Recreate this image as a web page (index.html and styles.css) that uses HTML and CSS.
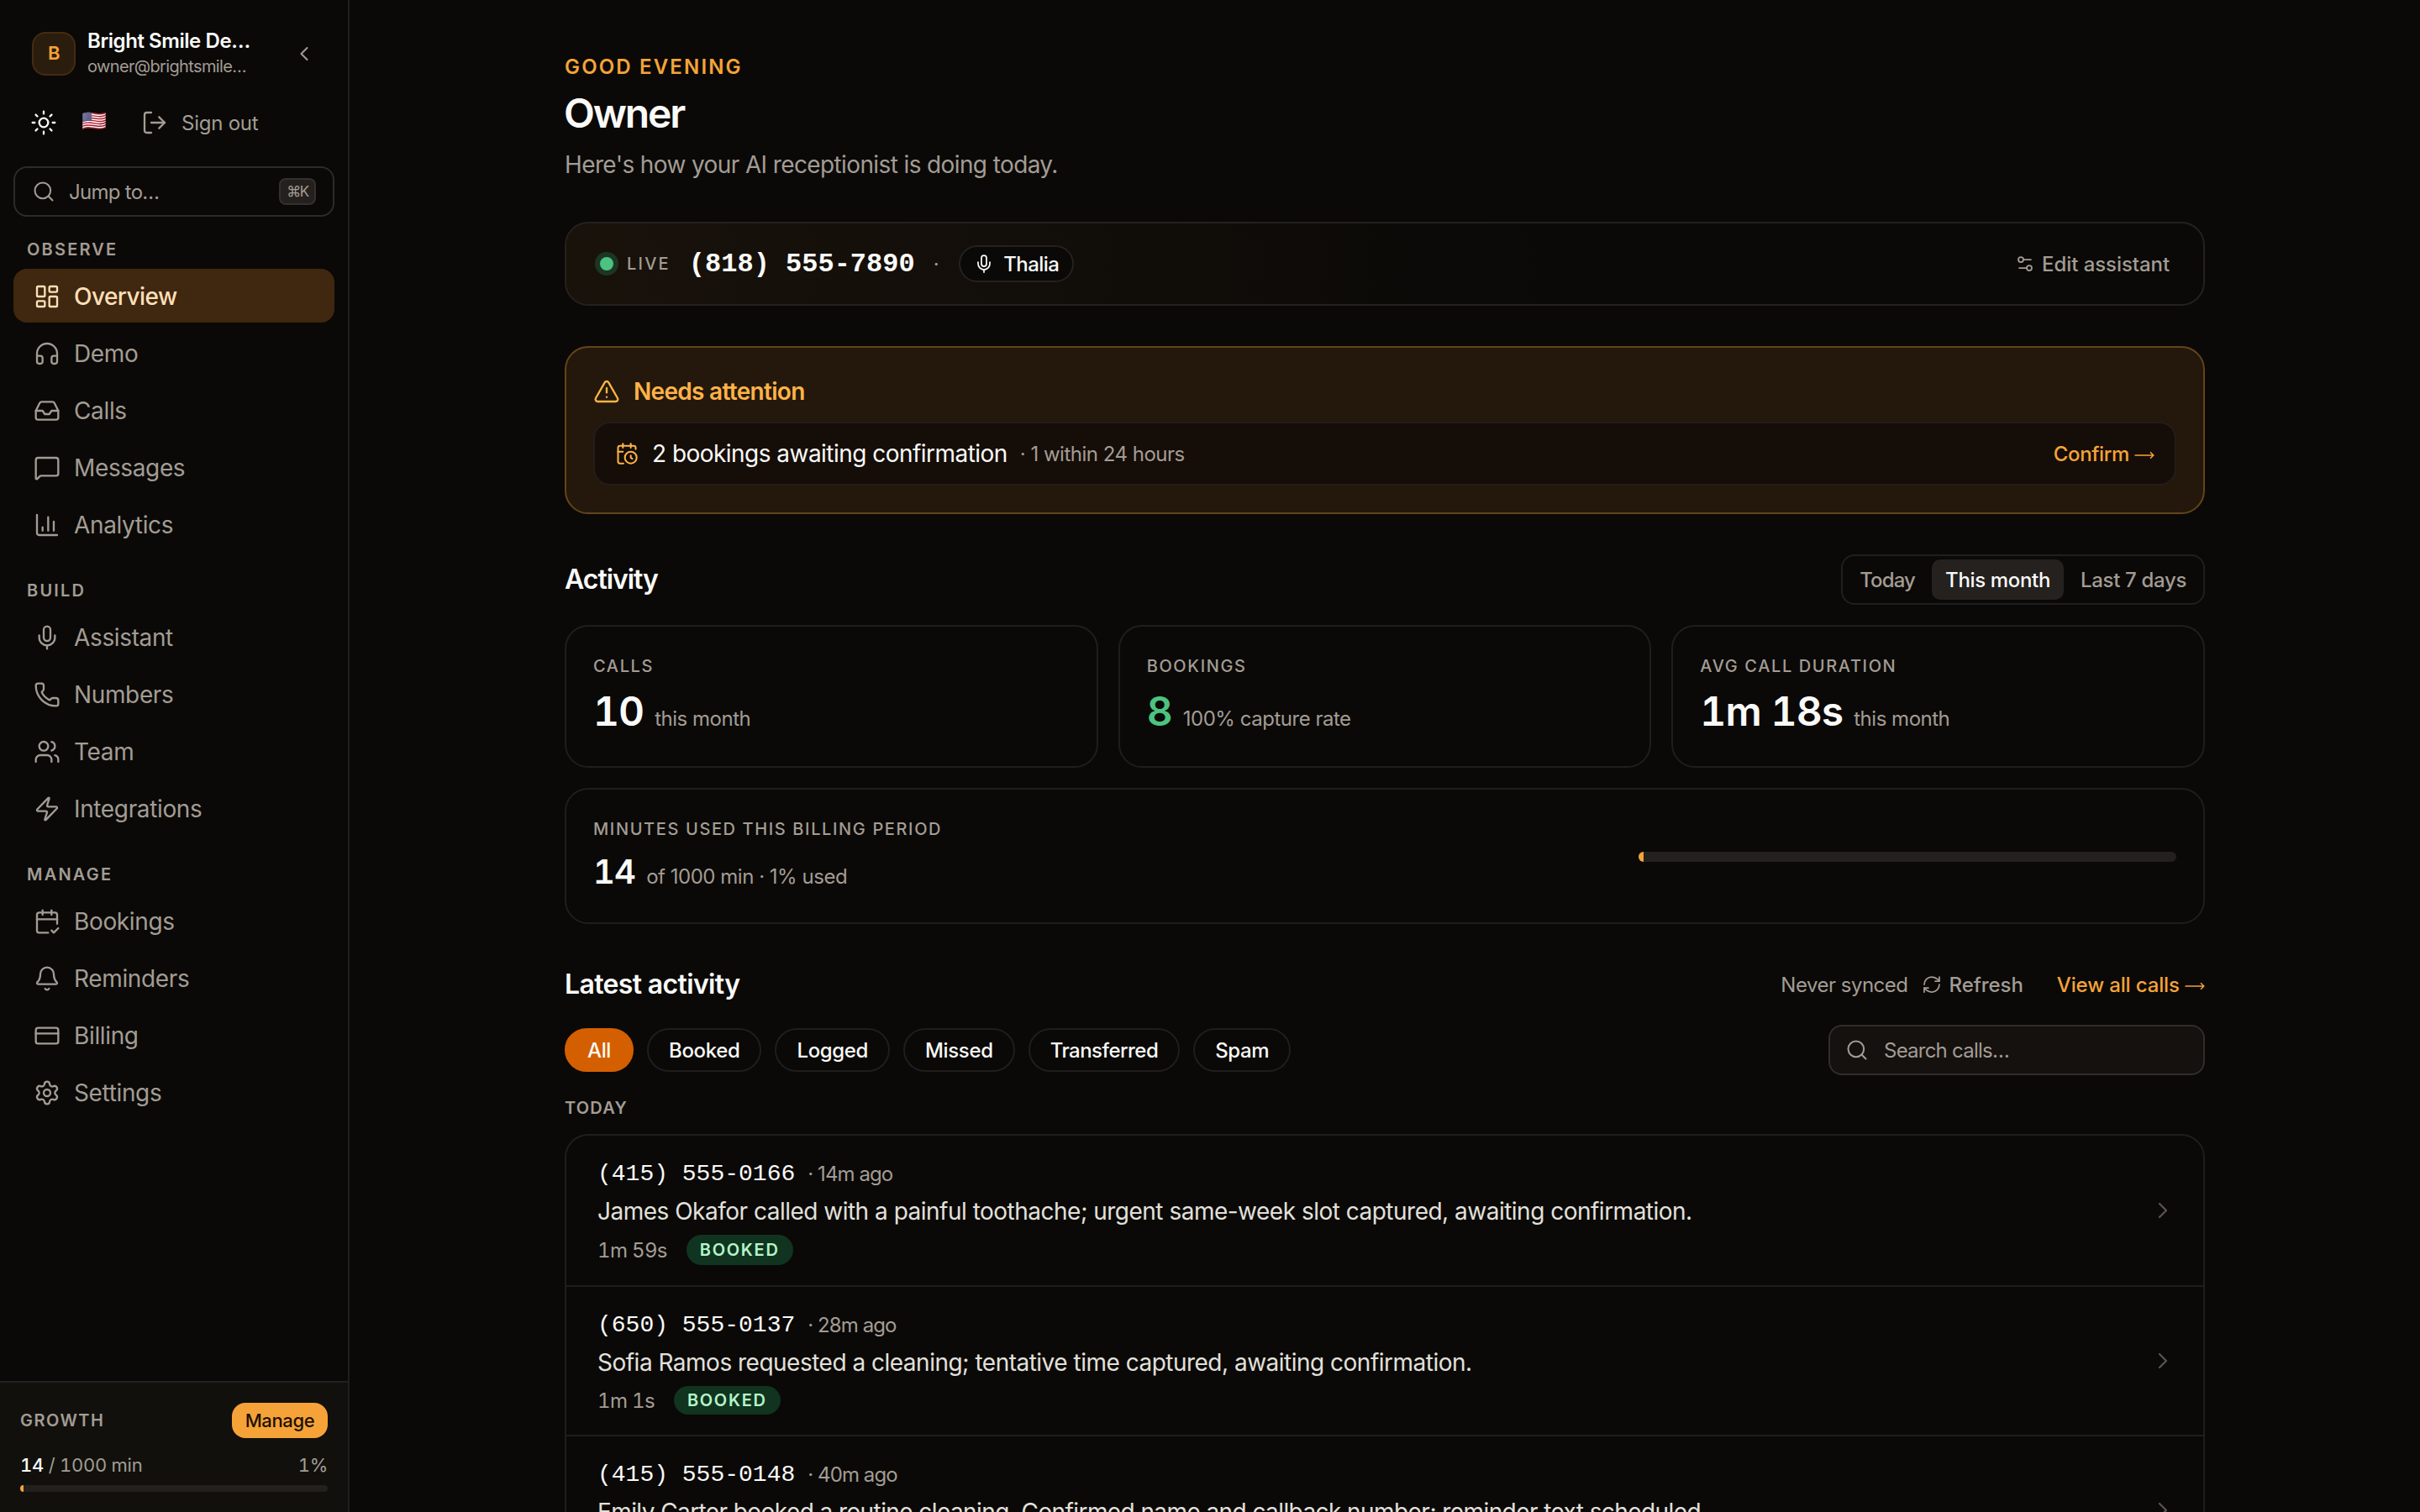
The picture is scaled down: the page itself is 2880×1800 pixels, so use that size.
FILE: index.html
```html
<!DOCTYPE html>
<html lang="en">

<head>
    <meta charset="UTF-8">
    <meta name="viewport" content="width=device-width, initial-scale=1.0">
    <title>Overview - Bright Smile Dental</title>
    <link rel="stylesheet" href="styles.css">
</head>

<body>

    <!-- Shared icons -->
    <svg class="sprite">
        <symbol id="i-search" viewBox="0 0 24 24"><path d="m21 21-4.34-4.34"/><circle cx="11" cy="11" r="8"/></symbol>
        <symbol id="i-mic" viewBox="0 0 24 24"><path d="M12 19v3"/><path d="M19 10v2a7 7 0 0 1-14 0v-2"/><rect x="9" y="2" width="6" height="13" rx="3"/></symbol>
        <symbol id="i-right" viewBox="0 0 24 24"><path d="m9 18 6-6-6-6"/></symbol>
        <symbol id="i-arrow" viewBox="0 0 24 10"><path d="M0.5 5h22M19 1.2 22.8 5 19 8.8"/></symbol>
    </svg>

    <!-- Sidebar -->
    <aside class="sidebar">
        <div class="account">
            <div class="avatar">B</div>
            <div class="account-text">
                <div class="account-name">Bright Smile De…</div>
                <div class="account-mail">owner@brightsmile…</div>
            </div>
            <svg class="icon icon-28 collapse" viewBox="0 0 24 24"><path d="m15 18-6-6 6-6"/></svg>
        </div>

        <div class="quick">
            <svg class="icon sun" viewBox="0 0 24 24"><circle cx="12" cy="12" r="4"/><path d="M12 2v2M12 20v2M4.93 4.93l1.41 1.41M17.66 17.66l1.41 1.41M2 12h2M20 12h2M6.34 17.66l-1.41 1.41M19.07 4.93l-1.41 1.41"/></svg>
            <span class="flag">🇺🇸</span>
            <svg class="icon" viewBox="0 0 24 24"><path d="m16 17 5-5-5-5"/><path d="M21 12H9"/><path d="M9 21H5a2 2 0 0 1-2-2V5a2 2 0 0 1 2-2h4"/></svg>
            <span class="signout">Sign out</span>
        </div>

        <div class="jump">
            <svg class="icon icon-28"><use href="#i-search"/></svg>
            <span class="jump-text">Jump to…</span>
            <kbd>⌘K</kbd>
        </div>

        <nav>
            <div class="nav-label">Observe</div>
            <a class="nav-item active"><svg class="icon" viewBox="0 0 24 24"><rect x="3" y="3" width="7" height="9" rx="1"/><rect x="14" y="3" width="7" height="5" rx="1"/><rect x="14" y="12" width="7" height="9" rx="1"/><rect x="3" y="16" width="7" height="5" rx="1"/></svg>Overview</a>
            <a class="nav-item"><svg class="icon" viewBox="0 0 24 24"><path d="M3 14h3a2 2 0 0 1 2 2v3a2 2 0 0 1-2 2H5a2 2 0 0 1-2-2v-7a9 9 0 0 1 18 0v7a2 2 0 0 1-2 2h-1a2 2 0 0 1-2-2v-3a2 2 0 0 1 2-2h3"/></svg>Demo</a>
            <a class="nav-item"><svg class="icon" viewBox="0 0 24 24"><path d="M22 12h-6l-2 3h-4l-2-3H2"/><path d="M5.45 5.11 2 12v6a2 2 0 0 0 2 2h16a2 2 0 0 0 2-2v-6l-3.45-6.89A2 2 0 0 0 16.76 4H7.24a2 2 0 0 0-1.79 1.11z"/></svg>Calls</a>
            <a class="nav-item"><svg class="icon" viewBox="0 0 24 24"><path d="M22 17a2 2 0 0 1-2 2H6.828a2 2 0 0 0-1.414.586l-2.202 2.202A.71.71 0 0 1 2 21.286V5a2 2 0 0 1 2-2h16a2 2 0 0 1 2 2z"/></svg>Messages</a>
            <a class="nav-item"><svg class="icon" viewBox="0 0 24 24"><path d="M3 3v16a2 2 0 0 0 2 2h16"/><path d="M18 17V9"/><path d="M13 17V5"/><path d="M8 17v-3"/></svg>Analytics</a>

            <div class="nav-label">Build</div>
            <a class="nav-item"><svg class="icon"><use href="#i-mic"/></svg>Assistant</a>
            <a class="nav-item"><svg class="icon" viewBox="0 0 24 24"><path d="M13.832 16.568a1 1 0 0 0 1.213-.303l.355-.465A2 2 0 0 1 17 15h3a2 2 0 0 1 2 2v3a2 2 0 0 1-2 2A18 18 0 0 1 2 4a2 2 0 0 1 2-2h3a2 2 0 0 1 2 2v3a2 2 0 0 1-.8 1.6l-.468.351a1 1 0 0 0-.292 1.233 14 14 0 0 0 6.392 6.384"/></svg>Numbers</a>
            <a class="nav-item"><svg class="icon" viewBox="0 0 24 24"><path d="M16 21v-2a4 4 0 0 0-4-4H6a4 4 0 0 0-4 4v2"/><path d="M16 3.128a4 4 0 0 1 0 7.744"/><path d="M22 21v-2a4 4 0 0 0-3-3.87"/><circle cx="9" cy="7" r="4"/></svg>Team</a>
            <a class="nav-item"><svg class="icon" viewBox="0 0 24 24"><path d="M4 14a1 1 0 0 1-.78-1.63l9.9-10.2a.5.5 0 0 1 .86.46l-1.92 6.02A1 1 0 0 0 13 10h7a1 1 0 0 1 .78 1.63l-9.9 10.2a.5.5 0 0 1-.86-.46l1.92-6.02A1 1 0 0 0 11 14z"/></svg>Integrations</a>

            <div class="nav-label">Manage</div>
            <a class="nav-item"><svg class="icon" viewBox="0 0 24 24"><path d="M8 2v4"/><path d="M16 2v4"/><path d="M21 14V6a2 2 0 0 0-2-2H5a2 2 0 0 0-2 2v14a2 2 0 0 0 2 2h8"/><path d="M3 10h18"/><path d="m16 20 2 2 4-4"/></svg>Bookings</a>
            <a class="nav-item"><svg class="icon" viewBox="0 0 24 24"><path d="M10.268 21a2 2 0 0 0 3.464 0"/><path d="M3.262 15.326A1 1 0 0 0 4 17h16a1 1 0 0 0 .74-1.673C19.41 13.956 18 12.499 18 8A6 6 0 0 0 6 8c0 4.499-1.411 5.956-2.738 7.326"/></svg>Reminders</a>
            <a class="nav-item"><svg class="icon" viewBox="0 0 24 24"><rect x="2" y="5" width="20" height="14" rx="2"/><path d="M2 10h20"/></svg>Billing</a>
            <a class="nav-item"><svg class="icon" viewBox="0 0 24 24"><path d="M9.671 4.136a2.34 2.34 0 0 1 4.659 0 2.34 2.34 0 0 0 3.319 1.915 2.34 2.34 0 0 1 2.33 4.033 2.34 2.34 0 0 0 0 3.831 2.34 2.34 0 0 1-2.33 4.033 2.34 2.34 0 0 0-3.319 1.915 2.34 2.34 0 0 1-4.659 0 2.34 2.34 0 0 0-3.32-1.915 2.34 2.34 0 0 1-2.33-4.033 2.34 2.34 0 0 0 0-3.831A2.34 2.34 0 0 1 6.35 6.051a2.34 2.34 0 0 0 3.319-1.915"/><circle cx="12" cy="12" r="3"/></svg>Settings</a>
        </nav>

        <div class="plan">
            <div class="plan-row">
                <span class="plan-name">Growth</span>
                <button class="manage">Manage</button>
            </div>
            <div class="plan-row plan-usage">
                <span><b>14</b> / 1000 min</span>
                <span>1%</span>
            </div>
            <div class="bar"><div class="bar-fill" style="width: 1.1%"></div></div>
        </div>
    </aside>

    <!-- Page -->
    <main>
        <header>
            <div class="greeting">Good evening</div>
            <h1>Owner</h1>
            <p class="lead">Here's how your AI receptionist is doing today.</p>
        </header>

        <section class="live">
            <span class="dot"></span>
            <span class="live-label">Live</span>
            <span class="live-phone">(818) 555-7890</span>
            <span class="sep">·</span>
            <span class="voice"><svg class="icon icon-24"><use href="#i-mic"/></svg>Thalia</span>
            <a class="edit"><svg class="icon icon-24" viewBox="0 0 24 24"><path d="M14 17H5"/><path d="M19 7h-9"/><circle cx="17" cy="17" r="3"/><circle cx="7" cy="7" r="3"/></svg>Edit assistant</a>
        </section>

        <section class="attention">
            <div class="attention-title">
                <svg class="icon" viewBox="0 0 24 24"><path d="m21.73 18-8-14a2 2 0 0 0-3.48 0l-8 14A2 2 0 0 0 4 21h16a2 2 0 0 0 1.73-3"/><path d="M12 9v4"/><path d="M12 17h.01"/></svg>
                Needs attention
            </div>
            <div class="attention-item">
                <svg class="icon icon-28" viewBox="0 0 24 24"><path d="M16 14v2.2l1.6 1"/><path d="M16 2v4"/><path d="M21 7.5V6a2 2 0 0 0-2-2H5a2 2 0 0 0-2 2v14a2 2 0 0 0 2 2h3.5"/><path d="M3 10h5"/><path d="M8 2v4"/><circle cx="16" cy="16" r="6"/></svg>
                <span class="attention-text">2 bookings awaiting confirmation</span>
                <span class="attention-note">· 1 within 24 hours</span>
                <a class="link">Confirm <svg class="arrow"><use href="#i-arrow"/></svg></a>
            </div>
        </section>

        <div class="section-head activity-head">
            <h2>Activity</h2>
            <div class="segmented">
                <button>Today</button>
                <button class="on">This month</button>
                <button>Last 7 days</button>
            </div>
        </div>

        <div class="stats">
            <div class="card">
                <div class="label">Calls</div>
                <div class="value"><b>10</b><span>this month</span></div>
            </div>
            <div class="card">
                <div class="label">Bookings</div>
                <div class="value green"><b>8</b><span>100% capture rate</span></div>
            </div>
            <div class="card">
                <div class="label">Avg call duration</div>
                <div class="value"><b>1m 18s</b><span>this month</span></div>
            </div>
        </div>

        <div class="card minutes">
            <div class="minutes-text">
                <div class="label">Minutes used this billing period</div>
                <div class="value"><b>14</b><span>of 1000 min · 1% used</span></div>
            </div>
            <div class="bar"><div class="bar-fill" style="width: 1%"></div></div>
        </div>

        <div class="section-head latest-head">
            <h2>Latest activity</h2>
            <div class="sync">
                <span>Never synced</span>
                <span class="refresh"><svg class="icon icon-24" viewBox="0 0 24 24"><path d="M3 12a9 9 0 0 1 9-9 9.75 9.75 0 0 1 6.74 2.74L21 8"/><path d="M21 3v5h-5"/><path d="M21 12a9 9 0 0 1-9 9 9.75 9.75 0 0 1-6.74-2.74L3 16"/><path d="M8 16H3v5"/></svg>Refresh</span>
                <a class="link">View all calls <svg class="arrow"><use href="#i-arrow"/></svg></a>
            </div>
        </div>

        <div class="filters">
            <button class="pill on">All</button>
            <button class="pill">Booked</button>
            <button class="pill">Logged</button>
            <button class="pill">Missed</button>
            <button class="pill long">Transferred</button>
            <button class="pill">Spam</button>
            <div class="search">
                <svg class="icon icon-28"><use href="#i-search"/></svg>
                <span>Search calls…</span>
            </div>
        </div>

        <div class="day">Today</div>

        <div class="calls">
            <div class="call">
                <div class="call-body">
                    <div class="call-top"><span class="phone">(415) 555-0166</span><span class="ago">· 14m ago</span></div>
                    <div class="summary">James Okafor called with a painful toothache; urgent same-week slot captured, awaiting confirmation.</div>
                    <div class="meta"><span class="length">1m 59s</span><span class="badge">Booked</span></div>
                </div>
                <svg class="icon"><use href="#i-right"/></svg>
            </div>
            <div class="call">
                <div class="call-body">
                    <div class="call-top"><span class="phone">(650) 555-0137</span><span class="ago">· 28m ago</span></div>
                    <div class="summary">Sofia Ramos requested a cleaning; tentative time captured, awaiting confirmation.</div>
                    <div class="meta"><span class="length">1m 1s</span><span class="badge">Booked</span></div>
                </div>
                <svg class="icon"><use href="#i-right"/></svg>
            </div>
            <div class="call">
                <div class="call-body">
                    <div class="call-top"><span class="phone">(415) 555-0148</span><span class="ago">· 40m ago</span></div>
                    <div class="summary tight">Emily Carter booked a routine cleaning. Confirmed name and callback number; reminder text scheduled.</div>
                    <div class="meta"><span class="length">1m 12s</span><span class="badge">Booked</span></div>
                </div>
                <svg class="icon"><use href="#i-right"/></svg>
            </div>
        </div>
    </main>

</body>

</html>
```
FILE: styles.css
```css
* {
    box-sizing: border-box;
}

body {
    margin: 0;
    display: flex;
    height: 100vh;
    overflow: hidden;
    background-color: #0a0907;
    color: #fafaf8;
    font-family: Inter, "Liberation Sans", sans-serif;
    font-size: 24px;
    letter-spacing: -0.015em;
}

h1, h2, p {
    margin: 0;
}

button {
    border: none;
    background: none;
    padding: 0;
    color: inherit;
    font: inherit;
    letter-spacing: inherit;
    white-space: nowrap;
}

.sprite {
    display: none;
}

.icon {
    width: 32px;
    height: 32px;
    flex: none;
    fill: none;
    stroke: currentColor;
    stroke-width: 1.75;
    stroke-linecap: round;
    stroke-linejoin: round;
}

.icon-28 {
    width: 28px;
    height: 28px;
}

.icon-24 {
    width: 24px;
    height: 24px;
}

.arrow {
    width: 24px;
    height: 10px;
    fill: none;
    stroke: currentColor;
    stroke-width: 1.5;
    vertical-align: 2px;
}

/* Sidebar */
.sidebar {
    width: 416px;
    flex: none;
    display: flex;
    flex-direction: column;
    padding: 32px 16px 0;
    border-right: 2px solid #201f1d;
    color: #a39c94;
}

.account {
    display: flex;
    align-items: center;
    height: 64px;
    padding: 0 22px;
}

.avatar {
    width: 52px;
    height: 52px;
    border: 2px solid #432c12;
    border-radius: 16px;
    background-color: #2a1d0e;
    color: #f5a338;
    font-size: 22px;
    font-weight: 600;
    line-height: 46px;
    text-align: center;
}

.account-text {
    margin-left: 14px;
}

.account-name {
    color: #fafaf8;
    font-weight: 600;
    line-height: 31px;
    letter-spacing: -0.018em;
}

.account-mail {
    font-size: 20px;
    line-height: 31px;
    letter-spacing: -0.032em;
}

.collapse {
    margin-left: auto;
}

.quick {
    display: flex;
    align-items: center;
    height: 64px;
    margin: 18px 0 20px;
    padding-left: 20px;
}

.sun {
    color: #fafaf8;
}

.flag {
    width: 36px;
    margin: 0 35px 5px 29px;
    font-size: 24px;
}

.signout {
    margin-left: 16px;
    letter-spacing: -0.01em;
}

.jump {
    display: flex;
    align-items: center;
    height: 60px;
    padding: 0 20px;
    border: 2px solid #2d2b29;
    border-radius: 16px;
}

.jump-text {
    margin-left: 16px;
    letter-spacing: -0.03em;
}

kbd {
    width: 44px;
    height: 32px;
    margin-left: auto;
    border: 2px solid #33302e;
    border-radius: 8px;
    background-color: #24201e;
    font-family: Inter, sans-serif;
    font-size: 17px;
    line-height: 28px;
    text-align: center;
    letter-spacing: -0.09em;
}

.nav-label {
    margin: 32px 0 8px 16px;
    font-size: 20px;
    font-weight: 600;
    line-height: 30px;
    letter-spacing: 0.11em;
    text-transform: uppercase;
}

.nav-label:first-child {
    margin-top: 24px;
}

.nav-item {
    display: flex;
    align-items: center;
    gap: 16px;
    height: 64px;
    margin-bottom: 4px;
    padding: 1px 0 0 24px;
    border-radius: 16px;
    font-size: 28px;
}

.nav-item:has(+ .nav-label) {
    margin-bottom: 0;
}

.nav-item.active {
    background-color: #3f280f;
    color: #ffdfb8;
    font-weight: 500;
    letter-spacing: -0.02em;
}

.plan {
    margin: auto -16px 0;
    padding: 24px;
    border-top: 2px solid #23211f;
    background-color: #11100c;
    font-size: 22px;
}

.plan-row {
    display: flex;
    align-items: center;
    justify-content: space-between;
}

.plan-name {
    font-size: 20px;
    font-weight: 600;
    letter-spacing: 0.073em;
    text-transform: uppercase;
}

.manage {
    width: 114px;
    height: 42px;
    border-radius: 16px;
    background-color: #f5a338;
    color: #1d1003;
    font-weight: 500;
}

.plan-usage {
    height: 32px;
    margin: 16px 0 8px;
    letter-spacing: -0.012em;
    font-feature-settings: "tnum";
}

.plan-usage b {
    color: #fafaf8;
    font-weight: 500;
}

.bar {
    height: 8px;
    border-radius: 6px;
    background-color: #24201d;
    overflow: hidden;
}

.bar-fill {
    height: 100%;
    background-color: #f5a338;
}

/* Page */
main {
    width: 1952px;
    margin: 0 auto;
    padding-top: 64px;
}

.greeting {
    color: #f5a338;
    font-weight: 600;
    line-height: 32px;
    letter-spacing: 0.09em;
    text-transform: uppercase;
}

h1 {
    margin: 9px 0 11px -1px;
    font-size: 48px;
    font-weight: 600;
    line-height: 60px;
    letter-spacing: -0.045em;
}

.lead {
    color: #a39c94;
    font-size: 28px;
    line-height: 40px;
    letter-spacing: -0.022em;
}

.live {
    display: flex;
    align-items: center;
    height: 100px;
    margin: 48px 0;
    padding: 0 40px;
    border: 2px solid #24211e;
    border-radius: 28px;
    background: linear-gradient(90deg, #19120b, #0a0907 60%);
}

.dot {
    width: 16px;
    height: 16px;
    border-radius: 50%;
    background-color: #4cc380;
    box-shadow: 0 0 0 6px #1d3623;
}

.live-label {
    margin-left: 16px;
    color: #a39c94;
    font-size: 20px;
    font-weight: 500;
    letter-spacing: 0.11em;
    text-transform: uppercase;
}

.live-phone {
    margin-left: 22px;
    font-family: "Liberation Mono", monospace;
    font-size: 32px;
    font-weight: 600;
    letter-spacing: 0;
}

.sep {
    margin-left: 22px;
    color: #a39c94;
}

.voice {
    display: flex;
    align-items: center;
    gap: 11px;
    height: 44px;
    margin-left: 24px;
    padding: 0 16px;
    border: 2px solid #24221f;
    border-radius: 22px;
    background-color: #0a0907;
    font-weight: 500;
    letter-spacing: -0.024em;
}

.edit {
    display: flex;
    align-items: center;
    gap: 8px;
    margin-left: auto;
    color: #a39c94;
    font-weight: 500;
    letter-spacing: -0.003em;
}

.attention {
    height: 200px;
    padding: 32px;
    border: 2px solid #644419;
    border-radius: 28px;
    background-color: #23180b;
}

.attention-title {
    display: flex;
    align-items: center;
    gap: 16px;
    height: 40px;
    color: #ffb347;
    font-size: 28px;
    font-weight: 600;
    letter-spacing: -0.025em;
}

.attention-item {
    display: flex;
    align-items: center;
    height: 76px;
    margin-top: 16px;
    padding: 0 24px;
    border: 2px solid #241d1a;
    border-radius: 20px;
    background-color: #150d08;
}

.attention-item > .icon {
    color: #ffb347;
}

.attention-text {
    margin-left: 16px;
    font-size: 28px;
    letter-spacing: -0.019em;
}

.attention-note {
    margin-left: 15px;
    color: #a39c94;
    letter-spacing: -0.021em;
}

.link {
    margin-left: auto;
    color: #f5a338;
    font-weight: 500;
}

.section-head {
    display: flex;
    align-items: center;
    justify-content: space-between;
}

h2 {
    padding-bottom: 2px;
    font-size: 32px;
    font-weight: 600;
    letter-spacing: -0.02em;
}

.activity-head {
    height: 60px;
    margin: 48px 0 24px;
}

.activity-head h2 {
    letter-spacing: -0.032em;
}

.segmented {
    display: flex;
    gap: 4px;
    height: 60px;
    padding: 4px;
    border: 2px solid #201f1d;
    border-radius: 16px;
    color: #a39c94;
}

.segmented button {
    padding: 0 16px;
    border-radius: 10px;
    font-weight: 500;
    letter-spacing: -0.014em;
}

.segmented button:first-child {
    letter-spacing: -0.036em;
}

.segmented .on {
    background-color: #24211f;
    color: #fafaf8;
}

.stats {
    display: grid;
    grid-template-columns: repeat(3, 1fr);
    gap: 24px;
}

.card {
    height: 170px;
    padding: 32px;
    border: 2px solid #1f1e1c;
    border-radius: 28px;
}

.label {
    color: #a39c94;
    font-size: 20px;
    font-weight: 500;
    line-height: 30px;
    letter-spacing: 0.081em;
    text-transform: uppercase;
}

.value {
    display: flex;
    align-items: baseline;
    gap: 13px;
    margin-top: 9px;
    line-height: 60px;
}

.value b {
    font-size: 48px;
    font-weight: 600;
    letter-spacing: -0.02em;
    font-feature-settings: "tnum";
}

.value span {
    color: #a39c94;
    letter-spacing: -0.02em;
}

.value.green b {
    color: #4cc380;
}

.minutes {
    display: flex;
    justify-content: space-between;
    height: 162px;
    margin-top: 24px;
}

.minutes .value {
    line-height: 54px;
}

.minutes .value b {
    font-size: 40px;
}

.minutes .bar {
    width: 640px;
    height: 12px;
    margin-top: 2px;
    align-self: center;
}

.latest-head {
    height: 48px;
    margin: 48px 0 24px;
}

.sync {
    display: flex;
    align-items: center;
    color: #a39c94;
    letter-spacing: -0.021em;
}

.refresh {
    display: flex;
    align-items: center;
    gap: 8px;
    margin: 0 40px 0 17px;
    font-weight: 500;
    letter-spacing: -0.002em;
}

.sync .link {
    letter-spacing: -0.006em;
}

.filters {
    display: flex;
    align-items: center;
    gap: 16px;
    height: 60px;
}

.pill {
    height: 52px;
    padding: 0 24px;
    border: 2px solid #1f1e1c;
    border-radius: 26px;
    font-weight: 500;
}

.pill.on {
    padding: 0 25px;
    border-color: #d45f00;
    background-color: #d45f00;
}

.pill.long {
    letter-spacing: -0.022em;
}

.search {
    display: flex;
    align-items: center;
    gap: 18px;
    width: 448px;
    height: 60px;
    margin-left: auto;
    padding: 0 18px;
    border: 2px solid #302d2a;
    border-radius: 16px;
    background-color: #15110e;
    color: #a39c94;
    letter-spacing: -0.032em;
}

.day {
    margin: 24px 0 16px;
    color: #a39c94;
    font-size: 20px;
    font-weight: 600;
    line-height: 30px;
    letter-spacing: 0.06em;
    text-transform: uppercase;
}

.calls {
    border: 2px solid #1f1e1c;
    border-radius: 28px;
}

.call {
    display: flex;
    align-items: center;
    justify-content: space-between;
    padding: 24px 32px 24px 37px;
    border-bottom: 2px solid #1f1e1c;
    color: #a39c94;
}

.call > .icon {
    opacity: 0.5;
}

.call-top {
    display: flex;
    align-items: center;
    height: 42px;
}

.phone {
    color: #fafaf8;
    font-family: "Liberation Mono", monospace;
    font-size: 28px;
    letter-spacing: 0;
}

.ago {
    margin-left: 15px;
    letter-spacing: -0.038em;
}

.summary {
    margin: 4px 0 8px;
    color: #e3e0dc;
    font-size: 28px;
    line-height: 40px;
    letter-spacing: -0.018em;
    white-space: nowrap;
}

.summary.tight {
    letter-spacing: -0.021em;
}

.meta {
    display: flex;
    align-items: center;
    gap: 23px;
    height: 34px;
}

.call:first-child .meta {
    height: 36px;
}

.length {
    letter-spacing: -0.028em;
    font-feature-settings: "tnum";
}

.badge {
    display: flex;
    align-items: center;
    height: 100%;
    padding: 0 16px;
    border-radius: 18px;
    background-color: #10341f;
    color: #b4f5c9;
    font-size: 20px;
    font-weight: 600;
    letter-spacing: 0.085em;
    text-transform: uppercase;
}
```
